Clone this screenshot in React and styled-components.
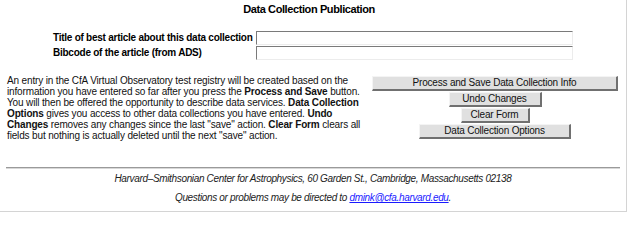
import styled, { createGlobalStyle } from 'styled-components'

const GlobalStyle = createGlobalStyle`
  body {
    margin: 0;
    background: #fff;
    font-family: "Liberation Sans", Arial, sans-serif;
    color: #000;
  }
`

const Frame = styled.div`
  width: 626px;
  height: 211px;
  border-right: 1px solid #d4d4d4;
  border-bottom: 1px solid #d4d4d4;
  overflow: hidden;
`

const Title = styled.h3`
  margin: 0;
  padding: 3px 8px 0 0;
  text-align: center;
  font-size: 11px;
  font-weight: bold;
  line-height: 13px;
  letter-spacing: -0.4px;
`

const FormGrid = styled.div`
  display: grid;
  grid-template-columns: 203px 317px;
  row-gap: 1px;
  align-items: center;
  margin: 15px 0 0 53px;
`

const Label = styled.label`
  font-size: 10px;
  font-weight: bold;
  letter-spacing: -0.25px;
  white-space: nowrap;
  line-height: 14px;
`

const TextInput = styled.input`
  box-sizing: border-box;
  width: 317px;
  height: 14px;
  margin: 0;
  padding: 0 2px;
  border: 1px solid;
  border-color: #7a7a7a #ececec #ececec #7a7a7a;
  background: #fff;
`

const InfoRow = styled.div`
  display: flex;
  align-items: flex-start;
  margin-top: 15px;
`

const Blurb = styled.p`
  margin: 0 0 0 7px;
  width: 362px;
  font-size: 10px;
  line-height: 11px;
  letter-spacing: -0.15px;
  white-space: nowrap;
  color: #111;
`

const ButtonStack = styled.div`
  display: flex;
  flex-direction: column;
  align-items: center;
  gap: 1px;
  margin-top: 1px;
  width: 252px;
`

const FormButton = styled.button`
  box-sizing: border-box;
  height: 15px;
  width: ${p => p.$w}px;
  margin: 0;
  padding: 0;
  background: #e0e0e0;
  border: 1px solid;
  border-color: #f4f4f4 #707070 #707070 #f4f4f4;
  border-width: 1px 2px 2px 1px;
  font-family: "Liberation Sans", Arial, sans-serif;
  font-size: 10px;
  line-height: 12px;
  letter-spacing: -0.2px;
  color: #111;
`

const Rule = styled.hr`
  margin: 26px 6px 0 6px;
  border: 0;
  border-top: 1px solid #9a9a9a;
  border-bottom: 1px solid #d8d8d8;
`

const Footer = styled.div`
  text-align: center;
  font-size: 10px;
  font-style: italic;
  letter-spacing: -0.34px;
  color: #222;
`

const FooterLine = styled.p`
  margin: ${p => p.$top}px 0 0 0;
  line-height: 12px;
`

const MailLink = styled.a`
  color: #1a1aff;
  text-decoration: underline;
`

export default function App() {
  return (
    <>
      <GlobalStyle />
      <Frame>
        <Title>Data Collection Publication</Title>
        <FormGrid>
          <Label>Title of best article about this data collection</Label>
          <TextInput type="text" />
          <Label>Bibcode of the article (from ADS)</Label>
          <TextInput type="text" />
        </FormGrid>
        <InfoRow>
          <Blurb>
            An entry in the CfA Virtual Observatory test registry will be created based on the<br />
            information you have entered so far after you press the <b>Process and Save</b> button.<br />
            You will then be offered the opportunity to describe data services. <b>Data Collection</b><br />
            <b>Options</b> gives you access to other data collections you have entered. <b>Undo</b><br />
            <b>Changes</b> removes any changes since the last "save" action. <b>Clear Form</b> clears all<br />
            fields but nothing is actually deleted until the next "save" action.
          </Blurb>
          <ButtonStack>
            <FormButton $w={246}>Process and Save Data Collection Info</FormButton>
            <FormButton $w={93}>Undo Changes</FormButton>
            <FormButton $w={69}>Clear Form</FormButton>
            <FormButton $w={152}>Data Collection Options</FormButton>
          </ButtonStack>
        </InfoRow>
        <Rule />
        <Footer>
          <FooterLine $top={4}>Harvard–Smithsonian Center for Astrophysics, 60 Garden St., Cambridge, Massachusetts 02138</FooterLine>
          <FooterLine $top={7}>
            Questions or problems may be directed to <MailLink href="#">dmink@cfa.harvard.edu</MailLink>.
          </FooterLine>
        </Footer>
      </Frame>
    </>
  )
}
